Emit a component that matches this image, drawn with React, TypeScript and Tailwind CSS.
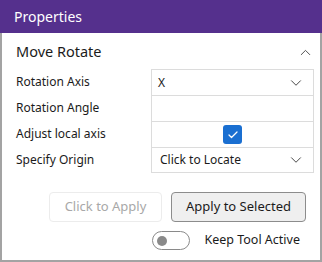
import { ChevronDown, ChevronUp, Check } from 'lucide-react';

const font = { fontFamily: '"Segoe UI", "Noto Sans", "Open Sans", sans-serif' };

function Row({ label, children, last }: { label: string; children: React.ReactNode; last?: boolean }) {
  return (
    <>
      <div className="flex h-[26px] items-center text-[12px] text-[#1b1b1b]">{label}</div>
      <div
        className={`flex h-[26px] items-center border-l border-t border-[#dcdcdc] ${last ? 'border-b' : ''}`}
      >
        {children}
      </div>
    </>
  );
}

export default function App() {
  return (
    <div className="h-[262px] w-[322px] bg-white" style={font}>
      <div className="flex h-[33px] items-center bg-[#55308d] px-[14px] text-[14px] text-white">Properties</div>
      <div className="flex h-[229px] flex-col border-x-2 border-b-2 border-[#a3a3a3]">
        <div className="flex h-[36px] items-center justify-between pl-[14px] pr-[6px] pt-[2px]">
          <span className="text-[14.5px] text-[#1b1b1b]">Move Rotate</span>
          <ChevronUp size={17} strokeWidth={1.3} className="text-[#444]" />
        </div>
        <div className="ml-[14px] mr-[6px] grid grid-cols-[135px_1fr] border-r border-[#dcdcdc]">
          <Row label="Rotation Axis">
            <div className="flex w-full items-center justify-between pl-[6px] pr-[8px] text-[12px] text-[#1b1b1b]">
              <span>X</span>
              <ChevronDown size={18} strokeWidth={1.3} className="text-[#444]" />
            </div>
          </Row>
          <Row label="Rotation Angle">
            <span />
          </Row>
          <Row label="Adjust local axis">
            <div className="flex w-full justify-center">
              <div className="flex h-[19px] w-[19px] items-center justify-center rounded-[3px] bg-[#1a6fd1]">
                <Check size={12} strokeWidth={2.5} className="text-white" />
              </div>
            </div>
          </Row>
          <Row label="Specify Origin" last>
            <div className="flex w-full items-center justify-between pl-[8px] pr-[8px] text-[12px] text-[#1b1b1b]">
              <span>Click to Locate</span>
              <ChevronDown size={18} strokeWidth={1.3} className="text-[#444]" />
            </div>
          </Row>
        </div>
        <div className="mt-[19px] flex justify-end gap-[9px] pr-[14px]">
          <button className="h-[30px] w-[113px] rounded-[4px] border border-[#ececec] bg-white text-[13px] text-[#a8a8a8]">
            Click to Apply
          </button>
          <button className="h-[30px] w-[135px] rounded-[4px] border border-[#8c8c8c] bg-[#efefef] text-[13px] text-[#1b1b1b]">
            Apply to Selected
          </button>
        </div>
        <div className="mt-[9px] flex items-center justify-end gap-[14px] pr-[20px]">
          <div className="flex h-[19px] w-[38px] items-center rounded-full border border-[#8a8a8a] pl-[4px]">
            <div className="h-[10px] w-[10px] rounded-full bg-[#8a8a8a]" />
          </div>
          <span className="text-[12.5px] text-[#1b1b1b]">Keep Tool Active</span>
        </div>
      </div>
    </div>
  );
}
